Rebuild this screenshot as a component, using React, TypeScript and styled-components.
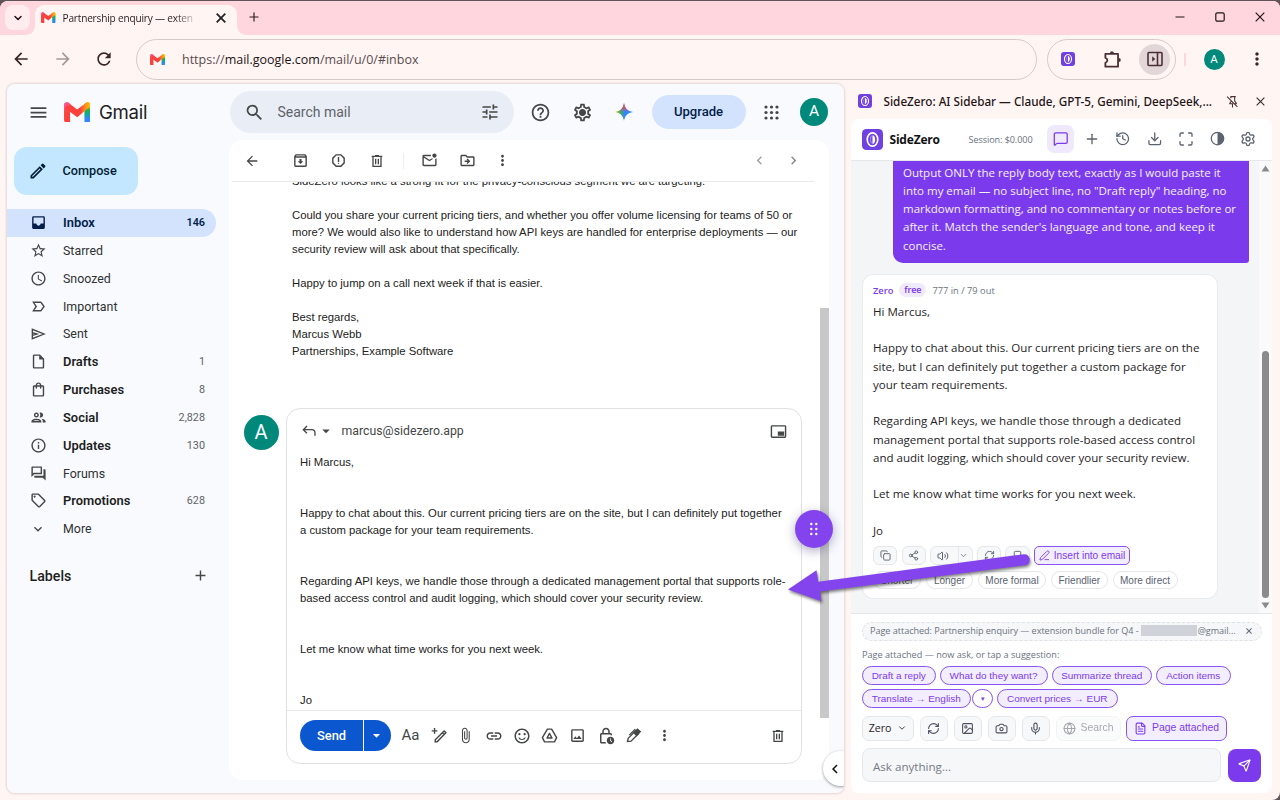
import React from "react";
import styled, { createGlobalStyle, css } from "styled-components";
import {
  MdAccessTime, MdArrowBack, MdArrowDropDown, MdArrowForward, MdAttachFile, MdChevronLeft, MdChevronRight,
  MdHelpOutline, MdInfoOutline, MdKeyboardArrowDown, MdLabelImportantOutline, MdLink, MdMenu,
  MdMoreVert, MdOutlineArchive, MdOutlineBrandingWatermark, MdOutlineDriveFileMove, MdOutlineForum, MdOutlineGroup,
  MdOutlineImage, MdOutlineInsertDriveFile, MdOutlineLockClock, MdOutlineMarkEmailUnread, MdOutlineModeEdit,
  MdOutlineReport, MdOutlineSell, MdOutlineSentimentSatisfied, MdOutlineSettings, MdOutlineShoppingBag,
  MdRefresh, MdSearch, MdStarBorder, MdTune, MdAdd,
} from "react-icons/md";
import {
  Bookmark, Camera, ChevronDown, Copy, Download, FileText, Globe, History, Image as ImageIcon, Maximize,
  MessageSquare, Mic, PenLine, Plus, RefreshCw, Send, Settings, Share2, Volume2,
} from "lucide-react";

const ui = `"Open Sans", "Noto Sans", sans-serif`;
const gsans = `Roboto, "Open Sans", sans-serif`;
const arial = `"Liberation Sans", Arial, sans-serif`;
const violet = "#7c3aed";

const GlobalStyle = createGlobalStyle`
  *, *::before, *::after { box-sizing: border-box; }
  body { margin: 0; background: #5f5458; overflow: hidden; }
  svg { display: block; flex: none; }
`;

/* ---------- window ---------- */

const Window = styled.div`
  position: relative;
  display: flex;
  flex-direction: column;
  width: 1280px;
  height: 799px;
  margin-top: 1px;
  border-radius: 8px 7px 8px 0;
  overflow: hidden;
  background: #fff6f4;
  font-family: ${ui};
  color: #202124;
`;

const TabStrip = styled.div`
  display: flex;
  align-items: flex-start;
  height: 33.5px;
  padding: 4px 0 0 5px;
  background: #ffd6de;
`;

const TabSearch = styled.div`
  display: grid;
  place-items: center;
  width: 25px;
  height: 25px;
  border-radius: 8px;
  background: #ffecef;
  color: #1f1416;
`;

const Tab = styled.div`
  position: relative;
  display: flex;
  align-items: center;
  width: 202px;
  height: 29.5px;
  margin-left: 5px;
  padding: 0 11.5px 3.5px 6px;
  border-radius: 9px 9px 0 0;
  background: #fff6f4;
  &::before, &::after {
    content: "";
    position: absolute;
    bottom: 0;
    width: 9px;
    height: 9px;
  }
  &::before { left: -9px; background: radial-gradient(circle at 0 0, transparent 8.5px, #fff6f4 9px); }
  &::after { right: -9px; background: radial-gradient(circle at 100% 0, transparent 8.5px, #fff6f4 9px); }
`;

const TabTitle = styled.span`
  flex: 1;
  margin-left: 7px;
  white-space: nowrap;
  font-size: 10.1px;
  letter-spacing: -0.19px;
  line-height: 16px;
  color: #2a1d20;
  mask-image: linear-gradient(90deg, #000 112px, transparent 136px);
`;

const Slot = styled.span<{ $w?: number; $ml?: number; $color?: string }>`
  display: flex;
  align-items: center;
  justify-content: center;
  flex: none;
  width: ${(p) => p.$w ?? 24}px;
  height: 24px;
  margin-left: ${(p) => p.$ml ?? 0}px;
  color: ${(p) => p.$color ?? "#444746"};
`;

const Push = styled.span`
  flex: 1;
`;

const AddressRow = styled.div`
  display: flex;
  align-items: center;
  height: 49.5px;
  padding: 0 11px 0 8.5px;
`;

const AddressBar = styled.div`
  display: flex;
  align-items: center;
  width: 901px;
  height: 41px;
  margin-left: 20px;
  padding-left: 13px;
  border: 1px solid #d6c9ca;
  border-radius: 21px;
`;

const Url = styled.span`
  margin-left: 17px;
  font-size: 12.5px;
  color: #5b4b4e;
  b { font-weight: 400; color: #1f1416; }
`;

const ExtensionPill = styled.div`
  display: flex;
  align-items: center;
  width: 129px;
  height: 41px;
  margin-left: 10px;
  border: 1px solid #d6c9ca;
  border-radius: 21px;
`;

const ActiveExtension = styled.span`
  display: grid;
  place-items: center;
  width: 31px;
  height: 31px;
  margin-left: 15px;
  border-radius: 50%;
  background: #e3d6d8;
`;

const ToolbarRule = styled.span`
  width: 1.5px;
  height: 13px;
  margin-left: 8px;
  background: #ffd6de;
`;

const Avatar = styled.span<{ $d: number; $f: number; $ml?: number }>`
  display: grid;
  place-items: center;
  flex: none;
  width: ${(p) => p.$d}px;
  height: ${(p) => p.$d}px;
  margin-left: ${(p) => p.$ml ?? 0}px;
  border-radius: 50%;
  background: #00897b;
  color: #fff;
  font: 400 ${(p) => p.$f}px/1 ${gsans};
`;

const Workspace = styled.div`
  display: flex;
  align-items: flex-start;
  gap: 7.5px;
  padding-left: 7px;
`;

/* ---------- mail client ---------- */

const Mail = styled.main`
  position: relative;
  display: grid;
  grid-template: 56px 1fr / 222px 614px;
  width: 836.5px;
  height: 709px;
  border-radius: 8px;
  overflow: hidden;
  background: #f8fafd;
  font-family: ${gsans};
`;

const MailShadow = styled.div`
  border-radius: 8px;
  box-shadow: 0 0 3px rgba(90, 50, 60, 0.35);
`;

const Brand = styled.div`
  display: flex;
  align-items: center;
  padding-left: 19px;
`;

const BrandName = styled.span`
  margin-left: 8.5px;
  font: 400 18.6px/24px Inter, Roboto, sans-serif;
  letter-spacing: -0.3px;
  color: #1f1f1f;
`;

const TopBar = styled.div`
  display: flex;
  align-items: center;
  padding-left: 1px;
`;

const SearchBox = styled.div`
  display: flex;
  align-items: center;
  width: 284px;
  height: 42px;
  padding: 0 12px;
  border-radius: 21px;
  background: #e9eef6;
  font-size: 14px;
  color: #5f6368;
`;

const SearchLabel = styled.span`
  margin-left: 11.5px;
`;

const Upgrade = styled.div`
  width: 94px;
  height: 34px;
  margin-left: 15.5px;
  border-radius: 17px;
  background: #d3e3fd;
  font-weight: 500;
  font-size: 13.1px;
  line-height: 34px;
  text-align: center;
  color: #041e49;
`;

const Sidebar = styled.nav`
  padding-top: 7px;
`;

const Compose = styled.div`
  display: flex;
  align-items: center;
  width: 124px;
  height: 48px;
  margin: 0 0 14px 7px;
  padding-left: 12px;
  border-radius: 13px;
  background: #c2e7ff;
  font-weight: 500;
  font-size: 12.7px;
  color: #001d35;
`;

const ComposeLabel = styled.span`
  margin-left: 12.5px;
  padding-bottom: 1px;
`;

const NavRow = styled.div<{ $active?: boolean; $bold?: boolean }>`
  display: flex;
  align-items: center;
  width: 209px;
  height: 27.83px;
  padding: 0 11px 0.5px 19px;
  border-radius: 0 14px 14px 0;
  font-size: 12.4px;
  color: #303234;
  ${(p) => p.$bold && css`font-weight: 600; font-size: 12.9px; color: #1f1f1f;`}
  ${(p) => p.$active && css`background: #d3e3fd; color: #041e49;`}
`;

const NavLabel = styled.span`
  flex: 1;
  margin-left: 13px;
`;

const NavCount = styled.span<{ $strong?: boolean }>`
  font-size: 10.8px;
  font-weight: ${(p) => (p.$strong ? 600 : 400)};
  color: ${(p) => (p.$strong ? "#041e49" : "#5f6368")};
`;

const LabelsRow = styled.div`
  display: flex;
  align-items: center;
  justify-content: space-between;
  height: 28px;
  margin-top: 19px;
  padding: 0 17px 0 22.5px;
  font-weight: 500;
  font-size: 14.2px;
  color: #1f1f1f;
`;

const Reader = styled.section`
  display: flex;
  flex-direction: column;
  width: 600px;
  height: 640px;
  border-radius: 14px;
  background: #fff;
  overflow: hidden;
`;

const ReaderTools = styled.div`
  display: flex;
  align-items: center;
  height: 42px;
  margin: 0 15px 0 3px;
  padding: 0 9px 0 8px;
  border-bottom: 1px solid #e8eaed;
`;

const ReaderRule = styled.span`
  width: 1px;
  height: 16px;
  margin-left: 13.5px;
  background: #eceef0;
`;

const ReaderScroll = styled.div`
  display: flex;
  flex: 1;
  min-height: 0;
`;

const Thread = styled.div`
  width: 591px;
  overflow: hidden;
`;

const MessageText = styled.div`
  margin: -9px 0 0 63px;
  font: 11.31px/16.95px ${arial};
  white-space: pre;
  color: #222;
`;

const ScrollThumb = styled.div`
  width: 9px;
  height: 410px;
  margin-top: 126px;
  background: #c8c8c8;
`;

const ReplyRow = styled.div`
  display: flex;
  align-items: flex-start;
  gap: 7px;
  margin: 48.5px 0 0 14.5px;
`;

const AvatarBox = styled.div`
  padding-top: 7px;
`;

const ReplyCard = styled.div`
  display: flex;
  flex-direction: column;
  width: 516px;
  height: 356px;
  border: 1px solid #e0e2e5;
  border-radius: 14px;
`;

const ReplyHead = styled.div`
  display: flex;
  align-items: center;
  height: 45px;
  padding: 0 10px 0 10.5px;
  font-size: 12.3px;
  color: #444746;
`;

const Recipient = styled.span`
  margin-left: 9.5px;
`;

const ReplyText = styled.div`
  flex: 1;
  padding-left: 13.5px;
  font: 11.31px/16.97px ${arial};
  white-space: pre;
  color: #222;
`;

const ReplyTools = styled.div`
  display: flex;
  align-items: center;
  height: 53px;
  padding: 0 10.5px 2px 13.5px;
  border-top: 1px solid #e8eaed;
`;

const SendButton = styled.div`
  display: flex;
  width: 91px;
  height: 31px;
  border-radius: 16px;
  overflow: hidden;
  background: #0b57d0;
  color: #fff;
  font-weight: 500;
  font-size: 12.9px;
  line-height: 31px;
`;

const SendLabel = styled.span`
  width: 64px;
  text-align: center;
  border-right: 1px solid #fff;
`;

const SendMore = styled.span`
  display: grid;
  place-items: center;
  flex: 1;
  padding-right: 2px;
`;

const FormatGlyph = styled.span`
  font: 400 15px/1 ${gsans};
`;

const CollapseTab = styled.div`
  position: absolute;
  right: -14px;
  bottom: 7px;
  display: flex;
  align-items: center;
  width: 35px;
  height: 35px;
  padding-left: 3px;
  border-radius: 50%;
  background: #fff;
  box-shadow: 0 1px 3px rgba(0, 0, 0, 0.4);
  color: #111;
`;

/* ---------- assistant panel ---------- */

const Aside = styled.aside`
  width: 421px;
`;

const AsideTitle = styled.div`
  display: flex;
  align-items: center;
  height: 34.5px;
  padding-left: 7px;
  font: 500 11.72px/18px "Noto Sans", ${ui};
  white-space: nowrap;
  color: #1f1416;
`;

const AsideTitleText = styled.span`
  width: 330px;
  margin-left: 11.5px;
`;

const AsidePage = styled.div`
  display: flex;
  flex-direction: column;
  height: 674px;
  border-radius: 8px;
  overflow: hidden;
  background: #fff;
`;

const AsideHeader = styled.div`
  display: flex;
  align-items: center;
  height: 42px;
  padding-left: 11px;
  border-bottom: 1px solid #e5e7eb;
`;

const AppName = styled.span`
  width: 79px;
  margin-left: 6.5px;
  font-weight: 700;
  font-size: 12px;
  letter-spacing: -0.2px;
  color: #111;
`;

const Session = styled.span`
  width: 65px;
  font-size: 9.1px;
  letter-spacing: -0.08px;
  color: #6b7280;
`;

const HeaderButton = styled.span<{ $on?: boolean }>`
  display: grid;
  place-items: center;
  width: 27.3px;
  height: 27.3px;
  margin-right: 4px;
  border-radius: 7px;
  background: ${(p) => (p.$on ? "#efe9fe" : "none")};
  color: ${(p) => (p.$on ? violet : "#5b6270")};
`;

const HeaderActions = styled.div`
  display: flex;
  margin-left: 13.5px;
`;

const ChatArea = styled.div`
  display: grid;
  grid-template-columns: 408px 13px;
  height: 452px;
  background: #f4f5f7;
`;

const Messages = styled.div`
  padding-left: 11px;
`;

const UserBubble = styled.div`
  width: 356px;
  height: 102px;
  margin-left: 31px;
  padding: 3.2px 10px;
  border-radius: 0 0 3px 10px;
  background: ${violet};
  color: #f5f0ff;
  font-size: 11.55px;
  letter-spacing: -0.02px;
  line-height: 18.2px;
  white-space: pre;
`;

const AnswerCard = styled.div`
  width: 356px;
  height: 325px;
  margin-top: 11px;
  padding: 7px 10px 0;
  border: 1px solid #e9ebee;
  border-radius: 11px;
  background: #fff;
`;

const AnswerMeta = styled.div`
  display: flex;
  align-items: center;
  gap: 6px;
  height: 17px;
  font-size: 9.3px;
  color: #6b7280;
`;

const Model = styled.b`
  font-weight: 600;
  color: ${violet};
`;

const Plan = styled.b`
  width: 27px;
  border-radius: 7px;
  background: #f0eafd;
  font-weight: 600;
  font-size: 9px;
  letter-spacing: -0.1px;
  line-height: 14px;
  text-align: center;
  color: ${violet};
`;

const AnswerText = styled.div`
  margin-top: 4.5px;
  font-size: 11.55px;
  line-height: 18.24px;
  white-space: pre;
  color: #1f2328;
`;

const ActionRow = styled.div`
  display: flex;
  gap: 4.2px;
  margin-top: 6.3px;
`;

const Action = styled.span<{ $w?: number }>`
  display: grid;
  place-items: center;
  width: ${(p) => p.$w ?? 24.4}px;
  height: 18.5px;
  border: 1px solid #e5e7eb;
  border-radius: 6px;
  background: #f7f8f9;
  color: #5b6270;
`;

const SplitAction = styled(Action)`
  grid-template-columns: 1fr 17px;
`;

const SplitSide = styled.span`
  display: grid;
  place-items: center;
  height: 100%;
  border-left: 1px solid #e5e7eb;
`;

const InsertButton = styled.span`
  display: flex;
  align-items: center;
  justify-content: center;
  gap: 4px;
  width: 96px;
  height: 18.5px;
  border: 1px solid #8a52ee;
  border-radius: 5px;
  background: #f3eefe;
  font: 10.15px/1 ${arial};
  color: ${violet};
`;

const QuickRow = styled.div`
  display: flex;
  gap: 5px;
  margin-top: 6px;
`;

const Quick = styled.span<{ $w: number }>`
  width: ${(p) => p.$w}px;
  height: 18.5px;
  border: 1px solid #e5e7eb;
  border-radius: 9px;
  font: 10px/17px ${arial};
  text-align: center;
  color: #5b6270;
`;

const Scrollbar = styled.div`
  display: flex;
  flex-direction: column;
  align-items: center;
  justify-content: space-between;
  padding: 4px 0 4px;
  background: #fafafb;
`;

const ScrollHandle = styled.span`
  width: 7.5px;
  height: 247px;
  margin: 176px 0 0;
  border-radius: 4px;
  background: #8b8b8b;
`;

const Footer = styled.div`
  flex: 1;
  padding: 8px 11px 0;
  border-top: 1px solid #e5e7eb;
  font-size: 9.15px;
  color: #6b7280;
`;

const AttachPill = styled.div`
  display: flex;
  align-items: center;
  width: 400px;
  height: 19.5px;
  padding: 0 9px 1px 7px;
  border: 1px dashed #dfe2e6;
  border-radius: 10px;
  background: #f6f7f8;
  font-size: 9.1px;
  letter-spacing: -0.04px;
  white-space: nowrap;
`;

const Redacted = styled.span`
  width: 56px;
  height: 11px;
  margin: 0 1px 0 2px;
  background: #cfd2d8;
`;

const Hint = styled.div`
  height: 25px;
  line-height: 28.5px;
`;

const Chips = styled.div<{ $top?: number }>`
  display: flex;
  align-items: center;
  margin-top: ${(p) => p.$top ?? 0}px;
`;

const Chip = styled.span<{ $w: number; $ml?: number; $tiny?: boolean }>`
  width: ${(p) => p.$w}px;
  height: 19px;
  margin-left: ${(p) => p.$ml ?? 0}px;
  border: 1px solid #8a52ee;
  border-radius: 10px;
  background: ${(p) => (p.$tiny ? "#fff" : "#f3eefe")};
  font: ${(p) => (p.$tiny ? 7 : 9.95)}px/17px ${arial};
  text-align: center;
  white-space: nowrap;
  color: ${violet};
`;

const ToolRow = styled.div`
  display: flex;
  align-items: center;
  gap: 5.5px;
  margin-top: 7.5px;
`;

const Tool = styled.span<{ $w?: number; $look?: "faded" | "on" }>`
  display: flex;
  align-items: center;
  justify-content: center;
  gap: 5px;
  width: ${(p) => p.$w ?? 28.5}px;
  height: 25.5px;
  border: 1px solid #e5e7eb;
  border-radius: 7px;
  background: #f7f8f9;
  color: #4b5260;
  font: 10.4px/1 ${arial};
  ${(p) => p.$look === "faded" && css`opacity: 0.5;`}
  ${(p) => p.$look === "on" && css`border-color: #8a52ee; background: #f3eefe; color: ${violet};`}
`;

const ModelTool = styled(Tool)`
  gap: 6px;
  font: 10.6px/1 ${ui};
  color: #1f2328;
`;

const PromptRow = styled.div`
  display: flex;
  align-items: center;
  gap: 7px;
  margin-top: 7px;
`;

const Prompt = styled.div`
  width: 360px;
  height: 34px;
  padding-left: 10px;
  border: 1px solid #e5e7eb;
  border-radius: 8px;
  background: #f6f7f8;
  font-size: 11.6px;
  line-height: 35px;
  color: #757b86;
`;

const SendPrompt = styled.span`
  display: grid;
  place-items: center;
  width: 33px;
  height: 33px;
  border-radius: 8px;
  background: ${violet};
  color: #fff;
`;

/* ---------- overlays ---------- */

const DragHandle = styled.div`
  position: absolute;
  left: 794.5px;
  top: 508.5px;
  display: grid;
  place-items: center;
  width: 38.5px;
  height: 38.5px;
  border-radius: 50%;
  background: #8344ee;
  box-shadow: 0 3px 11px rgba(60, 50, 110, 0.4);
`;

const Pointer = styled.svg`
  position: absolute;
  left: 770px;
  top: 539px;
  filter: drop-shadow(1px 2px 1.5px rgba(0, 0, 0, 0.5));
`;

/* ---------- drawings ---------- */

const GmailMark = ({ w, id }: { w: number; id: string }) => (
  <svg width={w} height={w * 0.76} viewBox="52 41 88 67">
    <defs>
      <linearGradient id={`${id}l`} x1="0" y1="0" x2="0" y2="1">
        <stop offset="0" stopColor="#ff5ea0" /><stop offset=".5" stopColor="#fc413d" />
      </linearGradient>
      <linearGradient id={`${id}r`} x1="0" y1="0" x2="0" y2="1">
        <stop offset=".1" stopColor="#ffb900" /><stop offset=".4" stopColor="#21b14b" />
        <stop offset=".62" stopColor="#12a5a0" /><stop offset=".85" stopColor="#3186ff" />
      </linearGradient>
      <linearGradient id={`${id}v`} x1="0" y1="0" x2="1" y2="0">
        <stop offset=".6" stopColor="#fc413d" /><stop offset=".8" stopColor="#ff8a1c" /><stop offset="1" stopColor="#ffc400" />
      </linearGradient>
    </defs>
    <path d="M120 48l5.600-4.200C131.500 39.300 140 43.600 140 51v51c0 3.300-2.700 6-6 6h-14z" fill={`url(#${id}r)`} />
    <path d="M72 48l-5.600-4.200C60.500 39.300 52 43.600 52 51v51c0 3.300 2.700 6 6 6h14z" fill={`url(#${id}l)`} />
    <path d="M60 42.500c3 0 5 .5 6.400 1.300L96 66l29.600-22.200c3-2 6-2 9-.6 5 3 6 9 3.400 14L96 92 56 62z" fill={`url(#${id}v)`} />
    <path d="M52 59v-8c0-7.400 8.500-11.700 14.400-7.200L74 50z" fill="#ff5390" opacity=".75" />
  </svg>
);

const ZeroMark = ({ s }: { s: number }) => (
  <svg width={s} height={s} viewBox="0 0 24 24">
    <rect width="24" height="24" rx="5" fill="#7040e0" />
    <ellipse cx="12" cy="12" rx="6" ry="7.600" fill="none" stroke="#fff" strokeWidth="1.900" />
    <path d="M12 7c4 0 4 10 0 10z" fill="#fff" />
    <path d="M12 7.200c-3 1-3 8.600 0 9.600" fill="none" stroke="#b79cf3" strokeWidth="1" />
  </svg>
);

const Sparkle = () => (
  <svg width="18" height="18" viewBox="0 0 24 24">
    <defs>
      <linearGradient id="spark" x1="0" y1=".5" x2="1" y2=".5">
        <stop offset="0" stopColor="#f9c412" /><stop offset=".3" stopColor="#3fae5c" />
        <stop offset=".55" stopColor="#3186ff" /><stop offset="1" stopColor="#3186ff" />
      </linearGradient>
      <linearGradient id="sparkTop" x1="0" y1="0" x2="0" y2="1">
        <stop offset="0" stopColor="#f04438" /><stop offset=".25" stopColor="#f04458" stopOpacity=".8" />
        <stop offset=".5" stopColor="#f04458" stopOpacity="0" />
      </linearGradient>
    </defs>
    <path d="M12 0c1 7 5 11 12 12-7 1-11 5-12 12-1-7-5-11-12-12C7 11 11 7 12 0z" fill="url(#spark)" />
    <path d="M12 0c1 7 5 11 12 12-7 1-11 5-12 12-1-7-5-11-12-12C7 11 11 7 12 0z" fill="url(#sparkTop)" />
  </svg>
);

const Trash = ({ s }: { s: number }) => (
  <svg width={s} height={s} viewBox="0 0 24 24" fill="none" stroke="currentColor" strokeWidth="2">
    <path d="M4 5h16M9 4h6M6 5v15h12V5M10 8.500v8.500M14 8.500v8.500" />
  </svg>
);

const InboxIcon = () => (
  <svg width="17" height="17" viewBox="0 0 24 24" fill="#041e49" fillRule="evenodd">
    <path d="M5 3h14a2 2 0 012 2v14a2 2 0 01-2 2H5a2 2 0 01-2-2V5a2 2 0 012-2zM5 5v8.500h4a3 3 0 006 0h4V5z" />
  </svg>
);

const SentIcon = () => (
  <svg width="16" height="16" viewBox="0 0 24 24" fill="none" stroke="currentColor" strokeWidth="2">
    <path d="M3.500 5v14L21 12zM3.500 9.800l7 2.200-7 2.200" />
  </svg>
);

const GearIcon = () => (
  <svg width="21" height="21" viewBox="0 0 24 24" color="#444746" fill="#444746">
    <MdOutlineSettings size={24} />
    <circle cx="12" cy="12" r="3.500" />
  </svg>
);

const AppsIcon = () => (
  <svg width="15" height="15" viewBox="0 0 15 15" fill="currentColor">
    {[2, 7.5, 13].map((y) => [2, 7.5, 13].map((x) => <circle key={`${x}-${y}`} cx={x} cy={y} r="1.600" />))}
  </svg>
);

const PuzzleIcon = () => (
  <svg width="19" height="19" viewBox="0 0 24 24" fill="none" stroke="currentColor" strokeWidth="2.300" strokeLinejoin="round">
    <path d="M3 5h16v16H3v-4.800a3.300 3.300 0 000-6.400z" />
    <path d="M8.800 4a2.500 2.500 0 015 0zM20 10.200a2.500 2.500 0 010 5z" fill="currentColor" stroke="none" />
  </svg>
);

const ReplyArrow = () => (
  <svg width="16" height="16" viewBox="0 0 24 24" fill="none" stroke="currentColor" strokeWidth="2">
    <path d="M9 4.500L3.500 10 9 15.500M4 10h12c3 0 5 2 5 5v4" />
  </svg>
);

const DriveMark = () => (
  <svg width="17" height="17" viewBox="0 0 24 24" fill="none" stroke="currentColor" strokeWidth="2" strokeLinejoin="round">
    <path d="M9 3h6l7 12-3 6H5l-3-6zM12 9l-3.500 6.500h7z" />
  </svg>
);

const MagicPen = () => (
  <svg width="17" height="17" viewBox="0 0 24 24" fill="none" stroke="currentColor" strokeWidth="2">
    <path d="M6 21v-3L18.500 5.500l2.500 2.500L9 20.500zM16 8l2.500 2.500M5 1.500v8M1 5.500h8" />
  </svg>
);

const InkPen = () => (
  <svg width="17" height="17" viewBox="0 0 24 24" fill="none" stroke="currentColor" strokeWidth="1.900">
    <path d="M3.500 20.500l1-4.500L15 5.500l4 4L8.500 20zM6 11.500L14.500 3" />
    <path d="M12.500 8l5-5 4 3.500-5 5.500z" fill="currentColor" />
  </svg>
);

const SidePanelIcon = () => (
  <svg width="16" height="16" viewBox="0 0 16 16" fill="none" stroke="#4a3035" strokeWidth="1.600">
    <rect x="1" y="1.500" width="14" height="13" rx="1" />
    <path d="M10.500 1.500v13" />
    <path d="M5.200 5.200v5.600L8.200 8z" fill="#4a3035" stroke="none" />
  </svg>
);

const Unpin = () => (
  <svg width="13" height="13" viewBox="0 0 24 24" fill="none" stroke="currentColor" strokeWidth="2">
    <path d="M8 3h10M9 3v3M16 3v8l3 4v1h-5M12 16v7M10 11l-3 4v1h6M2 3l19 19" />
  </svg>
);

const MaximizeIcon = () => (
  <svg width="10" height="10" viewBox="0 0 10 10" fill="none" stroke="#1f1416" strokeWidth="1.200">
    <rect x=".8" y=".8" width="8.400" height="8.400" rx="1.500" />
  </svg>
);

const MinimizeIcon = () => (
  <svg width="10" height="10" viewBox="0 0 10 10" stroke="#1f1416" strokeWidth="1.200"><path d="M.5 5h9" /></svg>
);

const CrossIcon = ({ s, w = 1.2 }: { s: number; w?: number }) => (
  <svg width={s} height={s} viewBox="0 0 10 10" stroke="currentColor" strokeWidth={w}><path d="M.7.7l8.600 8.600M9.300.7L.7 9.300" /></svg>
);

const Triangle = ({ down }: { down?: boolean }) => (
  <svg width="9" height="7" viewBox="0 0 9 7" fill="#8b8b8b"><path d={down ? "M.5.5h8L4.500 6.500z" : "M.5 6.500h8L4.500.5z"} /></svg>
);

/* ---------- content ---------- */

type NavEntry = { icon: React.ReactNode; label: string; count?: string; bold?: boolean; active?: boolean };

const nav: NavEntry[] = [
  { icon: <InboxIcon />, label: "Inbox", count: "146", bold: true, active: true },
  { icon: <MdStarBorder size={17} />, label: "Starred" },
  { icon: <MdAccessTime size={17} />, label: "Snoozed" },
  { icon: <MdLabelImportantOutline size={17} />, label: "Important" },
  { icon: <SentIcon />, label: "Sent" },
  { icon: <MdOutlineInsertDriveFile size={17} />, label: "Drafts", count: "1", bold: true },
  { icon: <MdOutlineShoppingBag size={17} />, label: "Purchases", count: "8", bold: true },
  { icon: <MdOutlineGroup size={17} />, label: "Social", count: "2,828", bold: true },
  { icon: <MdInfoOutline size={17} />, label: "Updates", count: "130", bold: true },
  { icon: <MdOutlineForum size={17} />, label: "Forums" },
  { icon: <MdOutlineSell size={17} />, label: "Promotions", count: "628", bold: true },
  { icon: <MdKeyboardArrowDown size={16} />, label: "More" },
];

const emailText = `SideZero looks like a strong fit for the privacy-conscious segment we are targeting.

Could you share your current pricing tiers, and whether you offer volume licensing for teams of 50 or
more? We would also like to understand how API keys are handled for enterprise deployments — our
security review will ask about that specifically.

Happy to jump on a call next week if that is easier.

Best regards,
Marcus Webb
Partnerships, Example Software`;

const replyText = `Hi Marcus,


Happy to chat about this. Our current pricing tiers are on the site, but I can definitely put together
a custom package for your team requirements.


Regarding API keys, we handle those through a dedicated management portal that supports role-
based access control and audit logging, which should cover your security review.


Let me know what time works for you next week.


Jo`;

const promptText = `Output ONLY the reply body text, exactly as I would paste it
into my email — no subject line, no "Draft reply" heading, no
markdown formatting, and no commentary or notes before or
after it. Match the sender's language and tone, and keep it
concise.`;

const answerText = `Hi Marcus,

Happy to chat about this. Our current pricing tiers are on the
site, but I can definitely put together a custom package for
your team requirements.

Regarding API keys, we handle those through a dedicated
management portal that supports role-based access control
and audit logging, which should cover your security review.

Let me know what time works for you next week.

Jo`;

function BrowserChrome() {
  return (
    <>
      <TabStrip>
        <TabSearch><ChevronDown size={12} strokeWidth={3} /></TabSearch>
        <Tab>
          <GmailMark w={14.5} id="t" />
          <TabTitle>Partnership enquiry — exten</TabTitle>
          <CrossIcon s={10} w={1.8} />
        </Tab>
        <Slot $ml={5} $color="#2a1d20"><Plus size={14} strokeWidth={2} /></Slot>
        <Push />
        <Slot><MinimizeIcon /></Slot>
        <Slot $ml={16}><MaximizeIcon /></Slot>
        <Slot $ml={16} $color="#1f1416"><CrossIcon s={10} /></Slot>
        <Slot $w={8} />
      </TabStrip>
      <AddressRow>
        <Slot $color="#3b2529"><MdArrowBack size={20} /></Slot>
        <Slot $ml={18} $color="#a8989a"><MdArrowForward size={20} /></Slot>
        <Slot $ml={17.5} $color="#3b2529"><MdRefresh size={20} /></Slot>
        <AddressBar>
          <GmailMark w={15} id="u" />
          <Url>https://<b>mail.google.com</b>/mail/u/0/#inbox</Url>
        </AddressBar>
        <ExtensionPill>
          <Slot $ml={8}><ZeroMark s={14} /></Slot>
          <Slot $ml={20} $color="#4a3035"><PuzzleIcon /></Slot>
          <ActiveExtension><SidePanelIcon /></ActiveExtension>
        </ExtensionPill>
        <ToolbarRule />
        <Push />
        <Avatar $d={21} $f={11.5}>A</Avatar>
        <Slot $ml={20.5} $color="#3b2529"><MdMoreVert size={20} /></Slot>
      </AddressRow>
    </>
  );
}

function MailClient() {
  return (
    <MailShadow>
      <Mail>
        <Brand>
          <Slot><MdMenu size={21} /></Slot>
          <Slot $w={27} $ml={13.5}><GmailMark w={26.5} id="b" /></Slot>
          <BrandName>Gmail</BrandName>
        </Brand>
        <TopBar>
          <SearchBox>
            <Slot><MdSearch size={21} /></Slot>
            <SearchLabel>Search mail</SearchLabel>
            <Push />
            <Slot><MdTune size={20} /></Slot>
          </SearchBox>
          <Slot $ml={14.5}><MdHelpOutline size={21} /></Slot>
          <Slot $ml={17.5}><GearIcon /></Slot>
          <Slot $ml={18}><Sparkle /></Slot>
          <Upgrade>Upgrade</Upgrade>
          <Slot $ml={14}><AppsIcon /></Slot>
          <Avatar $d={28} $f={15.5} $ml={16.5}>A</Avatar>
        </TopBar>
        <Sidebar>
          <Compose>
            <Slot $color="#001d35"><MdOutlineModeEdit size={20} /></Slot>
            <ComposeLabel>Compose</ComposeLabel>
          </Compose>
          {nav.map((n) => (
            <NavRow key={n.label} $bold={n.bold} $active={n.active}>
              <Slot>{n.icon}</Slot>
              <NavLabel>{n.label}</NavLabel>
              {n.count && <NavCount $strong={n.active}>{n.count}</NavCount>}
            </NavRow>
          ))}
          <LabelsRow>Labels<Slot><MdAdd size={17} /></Slot></LabelsRow>
        </Sidebar>
        <Reader>
          <ReaderTools>
            <Slot><MdArrowBack size={16} /></Slot>
            <Slot $ml={24.5}><MdOutlineArchive size={17} /></Slot>
            <Slot $ml={14}><MdOutlineReport size={17} /></Slot>
            <Slot $ml={14.5}><Trash s={16} /></Slot>
            <ReaderRule />
            <Slot $ml={13.5}><MdOutlineMarkEmailUnread size={17} /></Slot>
            <Slot $ml={14.5}><MdOutlineDriveFileMove size={17} /></Slot>
            <Slot $ml={11}><MdMoreVert size={17} /></Slot>
            <Push />
            <Slot $color="#a0a3a6"><MdChevronLeft size={17} /></Slot>
            <Slot $ml={10} $color="#85888b"><MdChevronRight size={17} /></Slot>
          </ReaderTools>
          <ReaderScroll>
            <Thread>
              <MessageText>{emailText}</MessageText>
              <ReplyRow>
                <AvatarBox><Avatar $d={35} $f={20}>A</Avatar></AvatarBox>
                <ReplyCard>
                  <ReplyHead>
                    <Slot><ReplyArrow /></Slot>
                    <Slot $w={12} $ml={-1}><MdArrowDropDown size={18} /></Slot>
                    <Recipient>marcus@sidezero.app</Recipient>
                    <Push />
                    <Slot><MdOutlineBrandingWatermark size={17} /></Slot>
                  </ReplyHead>
                  <ReplyText>{replyText}</ReplyText>
                  <ReplyTools>
                    <SendButton>
                      <SendLabel>Send</SendLabel>
                      <SendMore><MdArrowDropDown size={17} /></SendMore>
                    </SendButton>
                    <Slot $ml={7.5}><FormatGlyph>Aa</FormatGlyph></Slot>
                    <Slot $ml={4.5}><MagicPen /></Slot>
                    <Slot $ml={2.5}><MdAttachFile size={17} /></Slot>
                    <Slot $ml={4.5}><MdLink size={18} /></Slot>
                    <Slot $ml={4}><MdOutlineSentimentSatisfied size={18} /></Slot>
                    <Slot $ml={3.5}><DriveMark /></Slot>
                    <Slot $ml={4}><MdOutlineImage size={17} /></Slot>
                    <Slot $ml={4}><MdOutlineLockClock size={18} /></Slot>
                    <Slot $ml={3.5}><InkPen /></Slot>
                    <Slot $ml={7}><MdMoreVert size={17} /></Slot>
                    <Push />
                    <Slot><Trash s={16} /></Slot>
                  </ReplyTools>
                </ReplyCard>
              </ReplyRow>
            </Thread>
            <ScrollThumb />
          </ReaderScroll>
        </Reader>
        <CollapseTab><MdChevronLeft size={18} /></CollapseTab>
      </Mail>
    </MailShadow>
  );
}

function Assistant() {
  return (
    <Aside>
      <AsideTitle>
        <ZeroMark s={14} />
        <AsideTitleText>SideZero: AI Sidebar — Claude, GPT-5, Gemini, DeepSeek,...</AsideTitleText>
        <Slot $ml={7} $color="#4a3035"><Unpin /></Slot>
        <Slot $ml={4} $color="#3b2529"><CrossIcon s={9} /></Slot>
      </AsideTitle>
      <AsidePage>
        <AsideHeader>
          <ZeroMark s={21} />
          <AppName>SideZero</AppName>
          <Session>Session: $0.000</Session>
          <HeaderActions>
            <HeaderButton $on><MessageSquare size={15.5} /></HeaderButton>
            <HeaderButton><Plus size={16} /></HeaderButton>
            <HeaderButton><History size={15.5} /></HeaderButton>
            <HeaderButton><Download size={15.5} /></HeaderButton>
            <HeaderButton><Maximize size={16} /></HeaderButton>
            <HeaderButton>
              <svg width="15" height="15" viewBox="0 0 24 24"><circle cx="12" cy="12" r="10" fill="none" stroke="currentColor" strokeWidth="2" /><path d="M12 2a10 10 0 010 20z" fill="currentColor" /></svg>
            </HeaderButton>
            <HeaderButton><Settings size={16} /></HeaderButton>
          </HeaderActions>
        </AsideHeader>
        <ChatArea>
          <Messages>
            <UserBubble>{promptText}</UserBubble>
            <AnswerCard>
              <AnswerMeta><Model>Zero</Model><Plan>free</Plan>777 in / 79 out</AnswerMeta>
              <AnswerText>{answerText}</AnswerText>
              <ActionRow>
                <Action><Copy size={11} /></Action>
                <Action><Share2 size={11} /></Action>
                <SplitAction $w={42.5}><Volume2 size={12} /><SplitSide><ChevronDown size={9} /></SplitSide></SplitAction>
                <Action><RefreshCw size={11} /></Action>
                <Action><Bookmark size={11} /></Action>
                <InsertButton><PenLine size={11} />Insert into email</InsertButton>
              </ActionRow>
              <QuickRow>
                <Quick $w={48}>Shorter</Quick>
                <Quick $w={47}>Longer</Quick>
                <Quick $w={68}>More formal</Quick>
                <Quick $w={56.5}>Friendlier</Quick>
                <Quick $w={65}>More direct</Quick>
              </QuickRow>
            </AnswerCard>
          </Messages>
          <Scrollbar><Triangle /><ScrollHandle /><Triangle down /></Scrollbar>
        </ChatArea>
        <Footer>
          <AttachPill>
            Page attached: Partnership enquiry — extension bundle for Q4 -<Redacted />@gmail...
            <Push />
            <CrossIcon s={6} w={1.9} />
          </AttachPill>
          <Hint>Page attached — now ask, or tap a suggestion:</Hint>
          <Chips>
            <Chip $w={73.5}>Draft a reply</Chip>
            <Chip $w={108} $ml={4}>What do they want?</Chip>
            <Chip $w={100.5} $ml={4}>Summarize thread</Chip>
            <Chip $w={74.5} $ml={4}>Action items</Chip>
          </Chips>
          <Chips $top={4}>
            <Chip $w={108.5}>Translate → English</Chip>
            <Chip $w={21} $ml={1.5} $tiny>▾</Chip>
            <Chip $w={120.5} $ml={4}>Convert prices → EUR</Chip>
          </Chips>
          <ToolRow>
            <ModelTool $w={52}>Zero<ChevronDown size={10} /></ModelTool>
            <Tool><RefreshCw size={13} /></Tool>
            <Tool><ImageIcon size={13} /></Tool>
            <Tool><Camera size={13} /></Tool>
            <Tool><Mic size={13} /></Tool>
            <Tool $w={65} $look="faded"><Globe size={13} />Search</Tool>
            <Tool $w={101} $look="on"><FileText size={13} />Page attached</Tool>
          </ToolRow>
          <PromptRow>
            <Prompt>Ask anything...</Prompt>
            <SendPrompt><Send size={13} /></SendPrompt>
          </PromptRow>
        </Footer>
      </AsidePage>
    </Aside>
  );
}

export default function App() {
  return (
    <Window>
      <GlobalStyle />
      <BrowserChrome />
      <Workspace>
        <MailClient />
        <Assistant />
      </Workspace>
      <DragHandle>
        <svg width="10" height="14" viewBox="0 0 10 14" fill="#fff">
          {[2, 7, 12].map((y) => (
            <g key={y}><circle cx="2.300" cy={y} r="1.200" /><circle cx="7.300" cy={y} r="1.200" /></g>
          ))}
        </svg>
      </DragHandle>
      <Pointer width="270" height="75" viewBox="770 540 270 75" fill="#8344ee">
        <path d="M788 589.500L816.500 570.300 818.300 581.800 1024 554.200A5.600 5.600 0 011025.500 565.200L820 591.500 821.300 601.300z" />
      </Pointer>
    </Window>
  );
}
